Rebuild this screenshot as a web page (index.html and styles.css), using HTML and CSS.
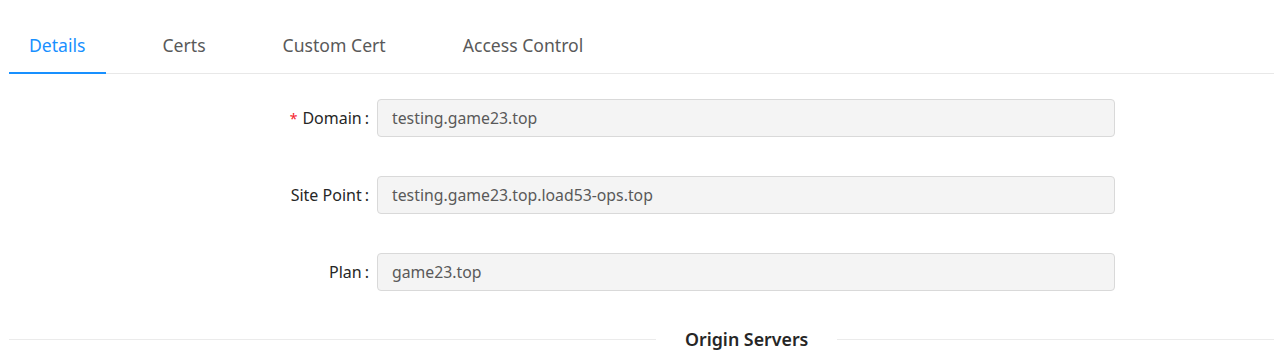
FILE: index.html
```html
<!DOCTYPE html>
<html lang="en">
<head>
    <meta charset="UTF-8">
    <meta name="viewport" content="width=device-width, initial-scale=1.0">
    <title>Site Details</title>
    <link rel="stylesheet" href="styles.css">
</head>
<body>
    <div class="page">
        <!-- Tabs -->
        <div class="tabs">
            <div class="tab active">Details</div>
            <div class="tab">Certs</div>
            <div class="tab">Custom Cert</div>
            <div class="tab">Access Control</div>
        </div>

        <!-- Details form -->
        <div class="form">
            <div class="form-row">
                <label class="form-label"><span class="required">*</span>Domain<span class="colon">:</span></label>
                <div class="form-input">testing.game23.top</div>
            </div>
            <div class="form-row">
                <label class="form-label">Site Point<span class="colon">:</span></label>
                <div class="form-input">testing.game23.top.load53-ops.top</div>
            </div>
            <div class="form-row">
                <label class="form-label">Plan<span class="colon">:</span></label>
                <div class="form-input">game23.top</div>
            </div>
        </div>

        <div class="divider">
            <span class="divider-line left"></span>
            <span class="divider-text">Origin Servers</span>
            <span class="divider-line"></span>
        </div>
    </div>
</body>
</html>
```

FILE: styles.css
```css
/* General Styles */
* {
    margin: 0;
    padding: 0;
    box-sizing: border-box;
}

body {
    font-family: "Noto Sans", "Open Sans", sans-serif;
    background: #fff;
    color: #262626;
    overflow: hidden;
}

.page {
    padding: 20px 0 0 9px;
}

/* Tabs */
.tabs {
    display: flex;
    border-bottom: 1px solid #e8e8e8;
}

.tab {
    padding: 13px 20px 16px;
    margin-right: 37px;
    font-size: 17.6px;
    line-height: 24px;
    color: #595959;
    position: relative;
    cursor: pointer;
}

.tab.active {
    color: #1890ff;
}

.tab.active::after {
    content: "";
    position: absolute;
    left: 0;
    right: 0;
    bottom: -1px;
    height: 2px;
    background: #1890ff;
}

/* Form */
.form {
    display: flex;
    flex-direction: column;
    gap: 39px;
    padding-top: 25px;
}

.form-row {
    display: flex;
    align-items: center;
}

.form-label {
    width: 368px;
    display: flex;
    justify-content: flex-end;
    align-items: center;
    font-size: 16px;
    color: #262626;
}

.required {
    color: #f5222d;
    margin-right: 5px;
    font-size: 14px;
}

.colon {
    margin: 0 8px 0 3px;
}

.form-input {
    width: 738px;
    height: 38px;
    padding: 0 14px;
    display: flex;
    align-items: center;
    background: #f4f4f4;
    border: 1px solid #d9d9d9;
    border-radius: 4px;
    font-size: 15.8px;
    color: #595959;
}

/* Divider */
.divider {
    display: flex;
    align-items: center;
    margin-top: 36px;
}

.divider-line {
    flex: 1;
    border-top: 1px solid #ebebeb;
}

.divider-line.left {
    flex: 0 0 647px;
}

.divider-text {
    padding: 0 29px;
    font-size: 17.8px;
    font-weight: 600;
    color: #262626;
}
```
